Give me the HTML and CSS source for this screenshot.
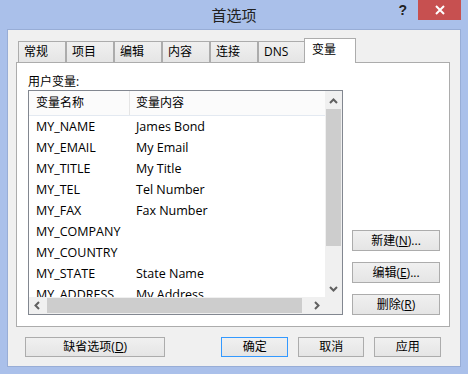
FILE: index.html
```html
<!DOCTYPE html>
<html lang="zh-CN">
<head>
<meta charset="utf-8">
<title>首选项</title>
<link rel="stylesheet" href="styles.css">
</head>
<body>
<div class="window">
  <div class="titlebar">
    <div class="tb-left"></div>
    <div class="title">首选项</div>
    <div class="controls">
      <span class="help">?</span>
      <span class="close"><svg width="12" height="10" viewBox="0 0 12 10"><path d="M2 1 L10 9 M10 1 L2 9" stroke="#fff" stroke-width="2" fill="none"/></svg></span>
    </div>
  </div>
  <div class="client">
    <div class="tabs">
      <div class="tab">常规</div>
      <div class="tab">项目</div>
      <div class="tab">编辑</div>
      <div class="tab">内容</div>
      <div class="tab">连接</div>
      <div class="tab">DNS</div>
      <div class="tab active">变量</div>
    </div>
    <div class="panel">
      <div class="label">用户变量:</div>
      <div class="panel-body">
        <div class="list">
          <div class="list-main">
            <div class="list-view">
              <div class="header">
                <div class="hcol1">变量名称</div>
                <div class="hcol2">变量内容</div>
              </div>
              <div class="row"><div class="c1">MY_NAME</div><div class="c2">James Bond</div></div>
              <div class="row"><div class="c1">MY_EMAIL</div><div class="c2">My Email</div></div>
              <div class="row"><div class="c1">MY_TITLE</div><div class="c2">My Title</div></div>
              <div class="row"><div class="c1">MY_TEL</div><div class="c2">Tel Number</div></div>
              <div class="row"><div class="c1">MY_FAX</div><div class="c2">Fax Number</div></div>
              <div class="row"><div class="c1">MY_COMPANY</div><div class="c2"></div></div>
              <div class="row"><div class="c1">MY_COUNTRY</div><div class="c2"></div></div>
              <div class="row"><div class="c1">MY_STATE</div><div class="c2">State Name</div></div>
              <div class="row"><div class="c1">MY_ADDRESS</div><div class="c2">My Address</div></div>
            </div>
            <div class="vscroll">
              <div class="sb-btn up"><svg width="17" height="18" viewBox="0 0 17 18"><path d="M5 12 L8.5 8.5 L12 12" stroke="#606060" stroke-width="2" fill="none"/></svg></div>
              <div class="vthumb"></div>
              <div class="vtrack"></div>
              <div class="sb-btn down"><svg width="17" height="17" viewBox="0 0 17 17"><path d="M5 7 L8.5 10.5 L12 7" stroke="#606060" stroke-width="2" fill="none"/></svg></div>
            </div>
          </div>
          <div class="hbar">
            <div class="hscroll">
              <div class="sb-btn left"><svg width="18" height="17" viewBox="0 0 18 17"><path d="M10 5 L6.5 8.5 L10 12" stroke="#606060" stroke-width="2" fill="none"/></svg></div>
              <div class="hthumb"></div>
              <div class="htrack"></div>
              <div class="sb-btn right"><svg width="17" height="17" viewBox="0 0 17 17"><path d="M7 5 L10.5 8.5 L7 12" stroke="#606060" stroke-width="2" fill="none"/></svg></div>
            </div>
            <div class="corner"></div>
          </div>
        </div>
        <div class="side-buttons">
          <div class="btn side">新建(<u>N</u>)...</div>
          <div class="btn side">编辑(<u>E</u>)...</div>
          <div class="btn side">删除(<u>R</u>)</div>
        </div>
      </div>
    </div>
    <div class="footer">
      <div class="btn defaults">缺省选项(<u>D</u>)</div>
      <div class="btn small ok">确定</div>
      <div class="btn small">取消</div>
      <div class="btn small">应用</div>
    </div>
  </div>
</div>
</body>
</html>
```
FILE: styles.css
```css
* { box-sizing: border-box; }
html, body { margin: 0; padding: 0; }
body {
  width: 468px;
  height: 374px;
  overflow: hidden;
  background: #aac0ea;
  font-family: "Open Sans", "Noto Sans CJK SC", sans-serif;
  font-size: 12px;
  color: #000;
}
.window {
  height: 374px;
  display: flex;
  flex-direction: column;
  padding: 0 7px 7px 7px;
}
.titlebar {
  height: 29px;
  display: grid;
  grid-template-columns: 1fr auto 1fr;
}
.title {
  font-family: "Noto Sans CJK SC", sans-serif;
  font-size: 15px;
  line-height: 29px;
  color: #222;
}
.controls {
  justify-self: end;
  display: flex;
  align-items: flex-start;
}
.help {
  font-family: "Liberation Sans", sans-serif;
  font-weight: bold;
  font-size: 14px;
  line-height: 20px;
  color: #222;
  margin-right: 11px;
}
.close {
  width: 43px;
  height: 20px;
  background: #c75050;
  display: flex;
  align-items: center;
  justify-content: center;
}
.client {
  flex: 1;
  background: #f0f0f0;
  border: 1px solid #98add6;
  padding: 8px 10px 9px 8px;
  display: flex;
  flex-direction: column;
}
.tabs {
  height: 24px;
  display: flex;
  align-items: flex-end;
  padding-left: 2px;
}
.tab {
  width: 48px;
  height: 21px;
  border: 1px solid #acacac;
  border-bottom: none;
  background: linear-gradient(#f0f0f0, #e5e5e5);
  padding-left: 5px;
  line-height: 19px;
}
.tab.active {
  position: relative;
  z-index: 1;
  width: 52px;
  height: 25px;
  margin: 0 -2px -1px -2px;
  background: #fff;
  padding-left: 7px;
  line-height: 22px;
}
.panel {
  height: 265px;
  background: #fff;
  border: 1px solid #acacac;
  padding: 11px 9px 11px 11px;
  display: flex;
  flex-direction: column;
}
.label {
  height: 16px;
  line-height: 16px;
}
.panel-body {
  flex: 1;
  display: flex;
  gap: 9px;
}
.list {
  width: 315px;
  height: 225px;
  border: 1px solid #828790;
  display: flex;
  flex-direction: column;
}
.list-main {
  height: 206px;
  display: flex;
  overflow: hidden;
}
.list-view {
  flex: 1;
  overflow: hidden;
  background: #fff;
}
.header {
  height: 25px;
  display: flex;
  background: #fbfbfb;
  border-bottom: 1px solid #e3e9f1;
  line-height: 24px;
}
.hcol1 {
  width: 101px;
  padding-left: 7px;
  border-right: 1px solid #e5e5e5;
}
.hcol2 {
  padding-left: 6px;
}
.row {
  height: 21px;
  display: flex;
  line-height: 21px;
  font-size: 12.5px;
  white-space: nowrap;
}
.c1 {
  width: 101px;
  padding-left: 7px;
}
.c2 {
  padding-left: 6px;
}
.vscroll {
  width: 17px;
  background: #f0f0f0;
  display: flex;
  flex-direction: column;
}
.sb-btn { display: flex; }
.sb-btn.up { height: 18px; }
.sb-btn.down { height: 17px; }
.vthumb {
  height: 137px;
  margin: 0 1px;
  background: #cdcdcd;
}
.vtrack { flex: 1; }
.hbar {
  height: 17px;
  display: flex;
}
.hscroll {
  flex: 1;
  display: flex;
  background: #f0f0f0;
}
.sb-btn.left { width: 18px; }
.sb-btn.right { width: 17px; }
.hthumb {
  width: 255px;
  margin: 1px 0;
  background: #cdcdcd;
}
.htrack { flex: 1; }
.corner {
  width: 17px;
  background: #f0f0f0;
}
.side-buttons {
  width: 88px;
  display: flex;
  flex-direction: column;
  justify-content: flex-end;
  gap: 11px;
}
.btn {
  border: 1px solid #acacac;
  background: linear-gradient(#f0f0f0, #e5e5e5);
  text-align: center;
  white-space: nowrap;
}
.btn u { text-underline-offset: 1px; }
.btn.side {
  height: 21px;
  line-height: 19px;
}
.footer {
  margin-top: 10px;
  padding: 0 9px;
  display: flex;
  gap: 10px;
}
.footer .btn {
  height: 20px;
  line-height: 18px;
}
.btn.defaults {
  width: 148px;
  margin-right: 46px;
}
.btn.small { width: 70px; }
.btn.ok { border-color: #3399ff; }
```
